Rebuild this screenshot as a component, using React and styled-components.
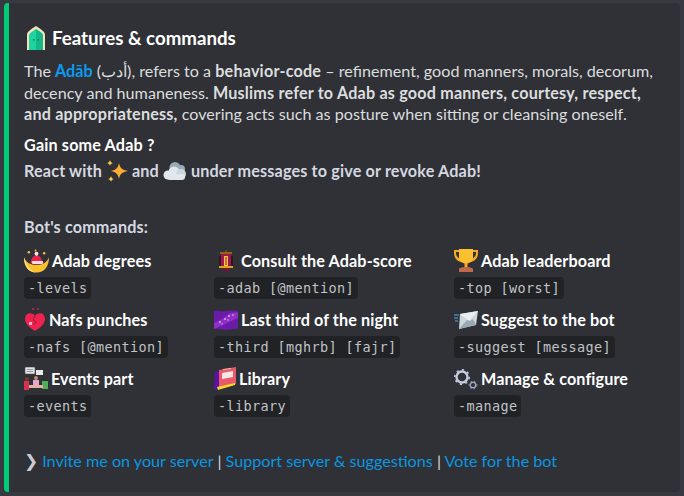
import React from 'react';
import styled, {createGlobalStyle} from 'styled-components';

const GlobalStyle = createGlobalStyle`
  html, body {
    margin: 0;
    padding: 0;
    background: #36393f;
  }
  body {
    font-family: Lato, "Noto Sans", sans-serif;
  }
`;

const DoorEmoji = () => (
  <svg width="18" height="24" viewBox="0 0 18 24">
    <path d="M0 24V9C0 5 5 3 9 0c4 3 9 5 9 9v15z" fill="#f3e2b8"/>
    <path d="M2 24V10c0-3 3-4 7-7 4 3 7 4 7 7v14z" fill="#1fd3a0"/>
    <path d="M9 3c4 3 7 4 7 7v14H9z" fill="#13b78a"/>
    <rect x="6" y="13" width="1.500" height="1.500" fill="#0a7d60"/>
    <rect x="10.500" y="13" width="1.500" height="1.500" fill="#0a7d60"/>
  </svg>
);

const SparklesEmoji = () => (
  <svg width="22" height="22" viewBox="0 0 22 22">
    <path d="M13 3c1 5 3 7 9 8-6 1-8 3-9 8-1-5-3-7-8-8 5-1 7-3 8-8z" fill="#ffac33"/>
    <path d="M4 0c.5 2 1.200 2.600 3 3-1.800.5-2.500 1-3 3-.5-2-1.200-2.500-3-3 1.800-.4 2.500-1 3-3z" fill="#ffcc4d"/>
    <path d="M5 16c.5 2 1.200 2.600 3 3-1.800.5-2.500 1-3 3-.5-2-1.200-2.500-3-3 1.800-.4 2.500-1 3-3z" fill="#ffcc4d"/>
  </svg>
);

const CloudEmoji = () => (
  <svg width="24" height="20" viewBox="0 0 24 20">
    <circle cx="12" cy="6.500" r="5.500" fill="#99aab5"/>
    <circle cx="18" cy="8" r="4" fill="#99aab5"/>
    <circle cx="5" cy="14" r="4.500" fill="#e1e8ed"/>
    <circle cx="11" cy="11" r="5.500" fill="#e1e8ed"/>
    <circle cx="18" cy="13" r="5" fill="#ccd6dd"/>
    <rect x="4" y="13" width="18" height="6" rx="3" fill="#e1e8ed"/>
  </svg>
);

const CrescentEmoji = () => (
  <svg width="25" height="24" viewBox="0 0 26 24">
    <path d="M0 8c0 10 5 16 13 16s13-6 13-16c-2 5-6 8-13 8S2 13 0 8z" fill="#fbc02d"/>
    <path d="M0 8c0 10 5 16 13 16C7 23 2 16 0 8z" fill="#ffe082"/>
    <path d="M7 14c0-5 3-8 6-8s6 3 6 8c-4 2-8 2-12 0z" fill="#e8214f"/>
    <rect x="8" y="12" width="12" height="3" rx="1.500" fill="#ffd9df"/>
    <circle cx="13" cy="4.500" r="2" fill="#ffe6ea"/>
    <circle cx="5" cy="3" r="1.300" fill="#fbc02d"/>
    <circle cx="12" cy="1" r="1" fill="#fbc02d"/>
    <circle cx="21" cy="4" r="1.300" fill="#fbc02d"/>
  </svg>
);

const LanternEmoji = () => (
  <svg width="24" height="22" viewBox="0 0 24 22">
    <rect x="11" y="0" width="2" height="2" fill="#6b4a10"/>
    <rect x="6" y="2" width="12" height="2" fill="#8a6a12"/>
    <rect x="7" y="4" width="10" height="14" fill="#a3154f"/>
    <rect x="5" y="6" width="2" height="10" fill="#2a1a1a"/>
    <rect x="17" y="6" width="2" height="10" fill="#2a1a1a"/>
    <rect x="10" y="6" width="4" height="10" fill="#f4c542"/>
    <rect x="11.500" y="7" width="1" height="8" fill="#a3154f"/>
    <rect x="5" y="16" width="14" height="2" fill="#d9a81c"/>
    <rect x="9" y="18" width="6" height="3" fill="#7a1238"/>
  </svg>
);

const TrophyEmoji = () => (
  <svg width="24" height="24" viewBox="0 0 24 24">
    <path d="M0 1h24v3c0 5-3 8-7 9h-2v-2c3-1 7-3 7-7V3H2v1c0 4 4 6 7 7v2H7C3 12 0 9 0 4z" fill="#f9a825"/>
    <path d="M5 0h14v8c0 4-3 6-7 7-4-1-7-3-7-7z" fill="#fbc02d"/>
    <rect x="10.500" y="14" width="3" height="5" fill="#f9a825"/>
    <path d="M5 20c0-1 3-2 7-2s7 1 7 2v3H5z" fill="#c1694f"/>
  </svg>
);

const HeartEmoji = () => (
  <svg width="22" height="24" viewBox="0 0 22 24">
    <rect x="8" y="0" width="2" height="2" fill="#b0243a"/>
    <rect x="13" y="0" width="2" height="2" fill="#b0243a"/>
    <path d="M11 8C9 4 1 4 1 11c0 5 5 9 10 12 5-3 10-7 10-12 0-7-8-7-10-3z" fill="#f0224f"/>
    <path d="M11 8l-2 4 3 2-2 3" stroke="#9a1a38" strokeWidth="1" fill="none"/>
    <rect x="5" y="14" width="3" height="3" fill="#ffb3c1"/>
  </svg>
);

const GalaxyEmoji = () => (
  <svg width="24" height="20" viewBox="0 0 24 20">
    <path d="M0 1c4-1 8 1 12 0s8-1 12 0v18c-4-1-8 1-12 1s-8-2-12-1z" fill="#6a1ba8"/>
    <path d="M0 13l8-4 8-6 8-1v6l-9 4-8 4-7 3z" fill="#8f2fc6"/>
    <circle cx="6" cy="12" r=".8" fill="#fff"/>
    <circle cx="11" cy="9" r=".8" fill="#fff"/>
    <circle cx="15" cy="6" r=".8" fill="#fff"/>
    <circle cx="19" cy="5" r=".7" fill="#fff"/>
    <circle cx="14" cy="10" r=".7" fill="#e0c0ff"/>
    <circle cx="8" cy="14" r=".7" fill="#e0c0ff"/>
  </svg>
);

const EnvelopeEmoji = () => (
  <svg width="24" height="18" viewBox="0 0 24 18">
    <path d="M0 4h5M0 7h4M1 10h3" stroke="#55acee" strokeWidth="1.200"/>
    <path d="M6 3l18-3-2 14-17 4z" fill="#ccd6dd"/>
    <path d="M6 3l18-3-9 10z" fill="#e8eef2"/>
    <path d="M5 18l8-9 3 1 3-2 3 6z" fill="#99aab5"/>
  </svg>
);

const MeetingEmoji = () => (
  <svg width="24" height="23" viewBox="0 0 24 23">
    <rect x="1" y="0" width="10" height="7" rx="1" fill="#dfe3e8" stroke="#555" strokeWidth=".6"/>
    <path d="M3 2.500h6M3 4.500h6" stroke="#777" strokeWidth=".7"/>
    <rect x="12" y="3" width="7" height="5" fill="#e8e8e8"/>
    <circle cx="3" cy="12" r="2" fill="#7a3b22"/>
    <rect x="0" y="14" width="5" height="9" fill="#d43352"/>
    <circle cx="12" cy="11" r="2" fill="#c98b5e"/>
    <rect x="9" y="13" width="6" height="5" fill="#e7a6d0"/>
    <circle cx="21" cy="12" r="2" fill="#2f2f2f"/>
    <rect x="18" y="14" width="6" height="8" fill="#4fae5a"/>
    <rect x="5" y="18" width="14" height="3" fill="#e8b0a0"/>
  </svg>
);

const BooksEmoji = () => (
  <svg width="22" height="24" viewBox="0 0 22 24">
    <path d="M1 5l6-2v16l-4 4-3-1z" fill="#5a12a6"/>
    <path d="M5 3l17-3v17L5 21z" fill="#e85a6a"/>
    <path d="M8 6l11-2v6L8 12z" fill="#f6e6e6"/>
    <path d="M3 20l18-4v2L4 23z" fill="#f4d925"/>
    <path d="M9 2l8-1v1l-8 1z" fill="#ffb0b8"/>
  </svg>
);

const GearsEmoji = () => (
  <svg width="24" height="22" viewBox="0 0 24 22">
    <circle cx="8" cy="9" r="5.500" fill="none" stroke="#c4cbe0" strokeWidth="2.400"/>
    <circle cx="8" cy="9" r="7.200" fill="none" stroke="#c4cbe0" strokeWidth="1.600" strokeDasharray="2.200 3.400"/>
    <circle cx="19" cy="17" r="2.800" fill="none" stroke="#9aa3bb" strokeWidth="1.400"/>
    <circle cx="19" cy="17" r="3.900" fill="none" stroke="#9aa3bb" strokeWidth="1" strokeDasharray="1.500 2.300"/>
  </svg>
);

const fields = [
  {icon: <CrescentEmoji/>, name: 'Adab degrees', code: '-levels'},
  {icon: <LanternEmoji/>, name: 'Consult the Adab-score', code: '-adab [@mention]'},
  {icon: <TrophyEmoji/>, name: 'Adab leaderboard', code: '-top [worst]'},
  {icon: <HeartEmoji/>, name: 'Nafs punches', code: '-nafs [@mention]'},
  {icon: <GalaxyEmoji/>, name: 'Last third of the night', code: '-third [mghrb] [fajr]'},
  {icon: <EnvelopeEmoji/>, name: 'Suggest to the bot', code: '-suggest [message]'},
  {icon: <MeetingEmoji/>, name: 'Events part', code: '-events'},
  {icon: <BooksEmoji/>, name: 'Library', code: '-library'},
  {icon: <GearsEmoji/>, name: 'Manage & configure', code: '-manage'},
];

const App = () => {
  return (
    <>
      <GlobalStyle/>
      <Page>
        <Embed>
          <Title><DoorEmoji/>Features &amp; commands</Title>
          <Description>
            <Line>The <AdabLink>Adāb</AdabLink> (أدب), refers to a <b>behavior-code</b> – refinement, good manners, morals, decorum,</Line>
            <Line>decency and humaneness. <b>Muslims refer to Adab as good manners, courtesy, respect,</b></Line>
            <Line><b>and appropriateness,</b> covering acts such as posture when sitting or cleansing oneself.</Line>
          </Description>
          <GainBlock>
            <GainTitle>Gain some Adab ?</GainTitle>
            <ReactLine>React with <SparklesEmoji/> and <CloudEmoji/> under messages to give or revoke Adab!</ReactLine>
          </GainBlock>
          <CommandsTitle>Bot's commands:</CommandsTitle>
          <FieldGrid>
            {fields.map((field) => (
              <Field key={field.code}>
                <FieldName>{field.icon}{field.name}</FieldName>
                <Code>{field.code}</Code>
              </Field>
            ))}
          </FieldGrid>
          <Footer>
            <Arrow>❯</Arrow> <FooterLink>Invite me on your server</FooterLink> <Pipe>|</Pipe> <FooterLink>Support server &amp; suggestions</FooterLink> <Pipe>|</Pipe> <FooterLink>Vote for the bot</FooterLink>
          </Footer>
        </Embed>
      </Page>
    </>
  );
};

const Page = styled.div`
  width: 684px;
  height: 496px;
  box-sizing: border-box;
  padding: 3px 4px 4px;
  overflow: hidden;
`;

const Embed = styled.div`
  height: 100%;
  box-sizing: border-box;
  background: #2f3136;
  border-left: 5px solid #00cc77;
  border-radius: 4px;
  padding: 21px 16px 0 15px;
  color: #dcddde;
`;

const Title = styled.div`
  display: flex;
  align-items: center;
  gap: 7px;
  height: 28px;
  margin-left: 3px;
  font-size: 18.7px;
  font-weight: 700;
  color: #fff;
`;

const Description = styled.div`
  margin-top: 8px;
  font-size: 16.15px;
  line-height: 21.5px;
  b {
    font-weight: 700;
    letter-spacing: 0.2px;
  }
`;

const Line = styled.div`
  white-space: nowrap;
`;

const AdabLink = styled.span`
  color: #0a9bf0;
  font-weight: 700;
`;

const GainBlock = styled.div`
  margin-top: 8px;
  font-size: 16.2px;
  font-weight: 700;
  letter-spacing: 0.15px;
`;

const GainTitle = styled.div`
  color: #fff;
  line-height: 24px;
`;

const ReactLine = styled.div`
  display: flex;
  align-items: center;
  gap: 4px;
  height: 28px;
  color: #d5d8e0;
`;

const CommandsTitle = styled.div`
  margin-top: 31px;
  font-size: 16.2px;
  font-weight: 700;
  letter-spacing: 0.15px;
  line-height: 22px;
  color: #d5d8e0;
`;

const FieldGrid = styled.div`
  display: grid;
  grid-template-columns: 190px 240px 1fr;
  row-gap: 8px;
  margin-top: 10px;
`;

const Field = styled.div`
  display: flex;
  flex-direction: column;
  align-items: flex-start;
`;

const FieldName = styled.div`
  display: flex;
  align-items: center;
  gap: 3px;
  height: 26px;
  font-size: 16.2px;
  font-weight: 700;
  letter-spacing: 0.1px;
  color: #fff;
  white-space: nowrap;
`;

const Code = styled.code`
  margin-top: 3px;
  padding: 2px 4px;
  background: #202225;
  border-radius: 4px;
  font-family: "DejaVu Sans Mono", "Liberation Mono", monospace;
  font-size: 13.5px;
  line-height: 18px;
  letter-spacing: 0.37px;
  color: #c0c3c7;
`;

const Footer = styled.div`
  margin-top: 33px;
  font-size: 16.15px;
  line-height: 22px;
  color: #c9cdd6;
  white-space: nowrap;
`;

const Arrow = styled.span`
  font-size: 17px;
`;

const FooterLink = styled.span`
  color: #0a96e0;
`;

const Pipe = styled.span`
  color: #dcddde;
`;

export default App;
